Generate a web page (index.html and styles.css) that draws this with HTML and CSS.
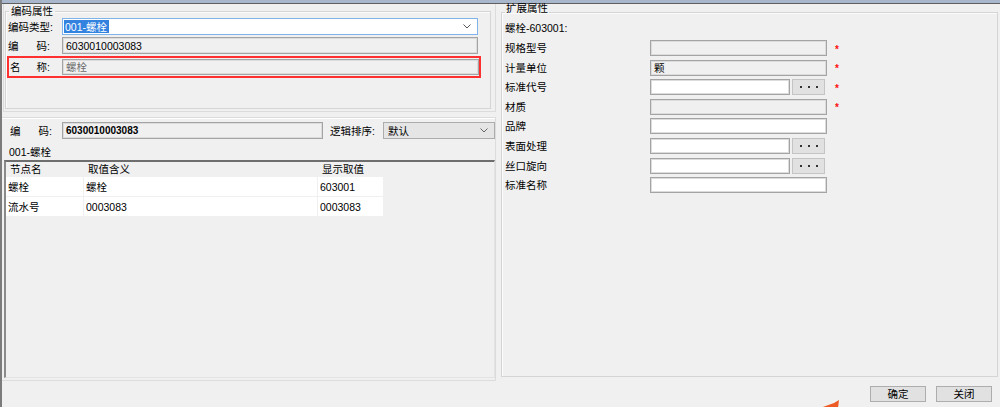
FILE: index.html
```html
<!DOCTYPE html>
<html lang="zh-CN">
<head>
<meta charset="utf-8">
<title>编码属性</title>
<link rel="stylesheet" href="styles.css">
</head>
<body>
<div class="window">
  <div class="titlebar"></div>
  <div class="main">
    <div class="left">
      <div class="panel-top">
        <fieldset class="group group-code">
          <legend>编码属性</legend>
          <div class="frow">
            <span class="lbl">编码类型:</span>
            <div class="combo focus">
              <span class="sel">001-螺栓</span>
              <svg class="chev" width="8" height="5" viewBox="0 0 8 5"><polyline points="0.5,0.5 4,4 7.5,0.5" fill="none" stroke="#555" stroke-width="1"/></svg>
            </div>
          </div>
          <div class="frow">
            <span class="lbl spread"><span>编</span><span>码:</span></span>
            <div class="inp">6030010003083</div>
          </div>
          <div class="redbox">
            <div class="frow in-red">
              <span class="lbl spread"><span>名</span><span>称:</span></span>
              <div class="inp dis">螺栓</div>
            </div>
          </div>
        </fieldset>
      </div>
      <div class="panel-bottom">
        <div class="coderow">
          <span class="lbl spread"><span>编</span><span>码:</span></span>
          <div class="inp bold code">6030010003083</div>
          <span class="lbl2">逻辑排序:</span>
          <div class="combo gray">
            <span class="val">默认</span>
            <svg class="chev" width="8" height="5" viewBox="0 0 8 5"><polyline points="0.5,0.5 4,4 7.5,0.5" fill="none" stroke="#666" stroke-width="1"/></svg>
          </div>
        </div>
        <div class="caption">001-螺栓</div>
        <div class="list">
          <div class="grid">
            <div class="hd">节点名</div><div class="hd">取值含义</div><div class="hd">显示取值</div>
            <div class="cell">螺栓</div><div class="cell">螺栓</div><div class="cell">603001</div>
            <div class="cell">流水号</div><div class="cell">0003083</div><div class="cell">0003083</div>
          </div>
        </div>
      </div>
    </div>
    <div class="right">
      <fieldset class="group group-ext">
        <legend>扩展属性</legend>
        <div class="ext-title">螺栓-603001:</div>
        <div class="ext-grid">
          <span class="elbl">规格型号</span>
          <div class="inp dis"></div>
          <span class="req">*</span>

          <span class="elbl">计量单位</span>
          <div class="inp dis dark">颗</div>
          <span class="req">*</span>

          <span class="elbl">标准代号</span>
          <div class="pick">
            <div class="inp white"></div>
            <div class="dots"><svg width="18" height="2" viewBox="0 0 18 2"><rect x="0" y="0" width="2" height="2" fill="#333"/><rect x="8" y="0" width="2" height="2" fill="#333"/><rect x="16" y="0" width="2" height="2" fill="#333"/></svg></div>
          </div>
          <span class="req">*</span>

          <span class="elbl">材质</span>
          <div class="inp dis"></div>
          <span class="req">*</span>

          <span class="elbl">品牌</span>
          <div class="inp white"></div>
          <span></span>

          <span class="elbl">表面处理</span>
          <div class="pick">
            <div class="inp white"></div>
            <div class="dots"><svg width="18" height="2" viewBox="0 0 18 2"><rect x="0" y="0" width="2" height="2" fill="#333"/><rect x="8" y="0" width="2" height="2" fill="#333"/><rect x="16" y="0" width="2" height="2" fill="#333"/></svg></div>
          </div>
          <span></span>

          <span class="elbl">丝口旋向</span>
          <div class="pick">
            <div class="inp white"></div>
            <div class="dots"><svg width="18" height="2" viewBox="0 0 18 2"><rect x="0" y="0" width="2" height="2" fill="#333"/><rect x="8" y="0" width="2" height="2" fill="#333"/><rect x="16" y="0" width="2" height="2" fill="#333"/></svg></div>
          </div>
          <span></span>

          <span class="elbl">标准名称</span>
          <div class="inp white"></div>
          <span></span>
        </div>
      </fieldset>
    </div>
  </div>
  <div class="footer">
    <div class="btn">确定</div>
    <div class="btn">关闭</div>
  </div>
  <svg class="arrow" width="22" height="8" viewBox="0 0 22 8"><polygon points="0,8 14,3 19,0 18,8" fill="#ee5a24"/></svg>
</div>
</body>
</html>
```

FILE: styles.css
```css
html, body {
  margin: 0;
  padding: 0;
}
body {
  width: 1000px;
  height: 407px;
  overflow: hidden;
  background: #f0f0f0;
  font-family: "Liberation Sans", "Noto Sans CJK SC", sans-serif;
  font-size: 10.5px;
  line-height: 12px;
  color: #000;
}
.window {
  position: relative;
  height: 407px;
  box-sizing: border-box;
  border-left: 2px solid #7b7b7b;
}
.titlebar {
  height: 3px;
  background: #a9b7cc;
  border-bottom: 1px solid #5f5f5f;
}
.main {
  display: flex;
  height: 377px;
}
.left {
  width: 494px;
  display: flex;
  flex-direction: column;
}
.panel-top {
  height: 108px;
  margin-left: 1px;
  box-sizing: border-box;
  border: 1px solid #dcdcdc;
  border-top: 0;
  padding: 1px 0 0 1px;
}
.group {
  margin: 0;
  min-width: 0;
  border: 1px solid #d5d5d5;
  box-shadow: inset 1px 1px 0 #fbfbfb;
}
.group legend {
  padding: 0 2px;
  margin-left: 1px;
}
.group-code {
  width: 486px;
  box-sizing: border-box;
  padding: 1px 12px 0 2px;
  height: 104px;
}
.frow {
  display: flex;
  align-items: center;
  height: 17px;
  margin-bottom: 2px;
}
.lbl {
  width: 54px;
  flex: none;
  white-space: nowrap;
}
.lbl.spread {
  display: flex;
  justify-content: space-between;
  width: 42px;
  margin-right: 12px;
}
.inp {
  flex: 1;
  height: 17px;
  box-sizing: border-box;
  border: 1px solid #a4a4a4;
  box-shadow: inset 0 0 0 1px #dcdcdc;
  background: #f0f0f0;
  display: flex;
  align-items: center;
  padding-left: 3px;
  white-space: nowrap;
}
.inp.dis { color: #6d6d6d; }
.inp.dis.dark { color: #000; }
.inp.white { background: #fff; }
.combo {
  flex: 1;
  height: 17px;
  box-sizing: border-box;
  border: 1px solid #7eb4ea;
  background: #fff;
  display: flex;
  align-items: center;
  padding: 0 6px 0 1px;
}
.combo .sel {
  background: #3382df;
  color: #fff;
  padding: 1px 2px 0 1px;
  line-height: 12px;
}
.combo .chev {
  margin-left: auto;
}
.redbox {
  margin: 0 -3px 0 -1px;
  height: 22px;
  box-sizing: border-box;
  border: 2px solid #ff3030;
  padding: 0 0 0 1px;
  display: flex;
  align-items: center;
}
.frow.in-red {
  flex: 1;
  margin: 0;
  height: 16px;
}
.frow.in-red .lbl.spread {
  width: 40px;
}
.frow.in-red .inp {
  height: 16px;
}
.panel-bottom {
  margin-top: 5px;
  margin-left: 0;
  height: 264px;
  box-sizing: border-box;
  border: 1px solid #dcdcdc;
  border-left: 0;
  box-shadow: inset 0 1px 0 #fff;
  padding: 4px 1px 0 2px;
}
.coderow {
  display: flex;
  align-items: center;
  height: 17px;
  padding-left: 6px;
}
.coderow .lbl.spread {
  margin-right: 10px;
}
.inp.code {
  flex: none;
  width: 261px;
  font-weight: bold;
  font-size: 10px;
}
.lbl2 {
  margin-left: 7px;
  width: 53px;
  flex: none;
}
.combo.gray {
  flex: none;
  width: 112px;
  background: #e5e5e5;
  border-color: #acacac;
  padding-left: 4px;
}
.caption {
  margin-top: 7px;
  padding-left: 5px;
  height: 12px;
}
.list {
  margin-top: 2px;
  height: 218px;
  box-sizing: border-box;
  border-style: solid;
  border-width: 2px 1px 1px 2px;
  border-color: #6e6e6e #e3e3e3 #e3e3e3 #8a8a8a;
  margin-right: -1px;
}
.grid {
  display: grid;
  grid-template-columns: 77px 233px 65px;
  grid-auto-rows: 19px;
  grid-template-rows: 14px;
  gap: 1px;
  width: 377px;
  margin-top: 0;
}
.grid .hd {
  padding-left: 4px;
  display: flex;
  align-items: center;
}
.grid .cell {
  background: #fff;
  padding-left: 2px;
  display: flex;
  align-items: center;
}
.right {
  flex: 1;
  padding-left: 5px;
}
.group-ext {
  width: 497px;
  height: 375px;
  box-sizing: border-box;
  padding: 0 4px 0 3px;
  margin-top: -2px;
}
.group-ext legend {
  padding: 0 1px 8px 1px;
  margin-left: 0;
  line-height: 12px;
}
.ext-title {
  height: 12px;
}
.ext-grid {
  margin-top: 6px;
  display: grid;
  grid-template-columns: 145px 177px 14px;
  grid-auto-rows: 16px;
  row-gap: 3.6px;
  align-items: center;
}
.elbl {
  white-space: nowrap;
}
.ext-grid .inp {
  height: 16px;
}
.pick {
  display: flex;
  gap: 2px;
  height: 16px;
  width: 175px;
}
.pick .inp {
  flex: none;
  width: 140px;
}
.dots {
  width: 33px;
  height: 16px;
  box-sizing: border-box;
  border: 1px solid #c4c4c4;
  background: #e1e1e1;
  display: flex;
  align-items: center;
  justify-content: center;
}
.dots svg { display: block; }
.req {
  color: #ff1010;
  font-size: 10px;
  font-weight: bold;
  padding: 3px 0 0 8px;
  line-height: 12px;
}
.footer {
  display: flex;
  justify-content: flex-end;
  gap: 10px;
  padding: 5px 8px 0 0;
}
.btn {
  width: 56px;
  height: 16px;
  box-sizing: border-box;
  border: 1px solid #adadad;
  background: #e1e1e1;
  display: flex;
  align-items: center;
  justify-content: center;
}
.arrow {
  position: absolute;
  left: 818px;
  top: 400px;
}
```
